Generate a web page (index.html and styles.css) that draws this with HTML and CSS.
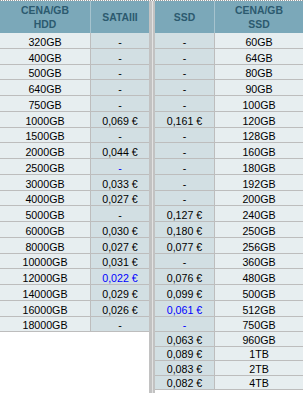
FILE: index.html
```html
<!DOCTYPE html>
<html>
<head>
<meta charset="utf-8">
<link rel="stylesheet" href="styles.css">
</head>
<body>
<div class="wrap">
  <table class="tbl tbl-left">
    <colgroup><col class="w-hdd"><col class="w-sata"></colgroup>
    <thead>
      <tr><th class="bl">CENA/GB<br>HDD</th><th>SATAIII</th></tr>
    </thead>
    <tbody>
      <tr><td class="lt bl">320GB</td><td class="dk">-</td></tr>
      <tr><td class="lt bl">400GB</td><td class="dk">-</td></tr>
      <tr><td class="lt bl">500GB</td><td class="dk">-</td></tr>
      <tr><td class="lt bl">640GB</td><td class="dk">-</td></tr>
      <tr><td class="lt bl">750GB</td><td class="dk">-</td></tr>
      <tr><td class="lt bl">1000GB</td><td class="dk">0,069 €</td></tr>
      <tr><td class="lt bl">1500GB</td><td class="dk">-</td></tr>
      <tr><td class="lt bl">2000GB</td><td class="dk">0,044 €</td></tr>
      <tr><td class="lt bl">2500GB</td><td class="dk blue">-</td></tr>
      <tr><td class="lt bl">3000GB</td><td class="dk">0,033 €</td></tr>
      <tr><td class="lt bl">4000GB</td><td class="dk">0,027 €</td></tr>
      <tr><td class="lt bl">5000GB</td><td class="dk">-</td></tr>
      <tr><td class="lt bl">6000GB</td><td class="dk">0,030 €</td></tr>
      <tr><td class="lt bl">8000GB</td><td class="dk">0,027 €</td></tr>
      <tr><td class="lt bl">10000GB</td><td class="dk">0,031 €</td></tr>
      <tr><td class="lt bl">12000GB</td><td class="dk blue">0,022 €</td></tr>
      <tr><td class="lt bl">14000GB</td><td class="dk">0,029 €</td></tr>
      <tr><td class="lt bl">16000GB</td><td class="dk">0,026 €</td></tr>
      <tr><td class="lt bl">18000GB</td><td class="dk">-</td></tr>
    </tbody>
  </table>
  <div class="sep"><span class="sep-a"></span><span class="sep-b"></span></div>
  <table class="tbl tbl-right">
    <colgroup><col class="w-ssd"><col class="w-cap"></colgroup>
    <thead>
      <tr><th class="bl">SSD</th><th>CENA/GB<br>SSD</th></tr>
    </thead>
    <tbody>
      <tr><td class="dk bl">-</td><td class="lt">60GB</td></tr>
      <tr><td class="dk bl">-</td><td class="lt">64GB</td></tr>
      <tr><td class="dk bl">-</td><td class="lt">80GB</td></tr>
      <tr><td class="dk bl">-</td><td class="lt">90GB</td></tr>
      <tr><td class="dk bl">-</td><td class="lt">100GB</td></tr>
      <tr><td class="dk bl">0,161 €</td><td class="lt">120GB</td></tr>
      <tr><td class="dk bl">-</td><td class="lt">128GB</td></tr>
      <tr><td class="dk bl">-</td><td class="lt">160GB</td></tr>
      <tr><td class="dk bl">-</td><td class="lt">180GB</td></tr>
      <tr><td class="dk bl">-</td><td class="lt">192GB</td></tr>
      <tr><td class="dk bl">-</td><td class="lt">200GB</td></tr>
      <tr><td class="dk bl">0,127 €</td><td class="lt">240GB</td></tr>
      <tr><td class="dk bl">0,180 €</td><td class="lt">250GB</td></tr>
      <tr><td class="dk bl">0,077 €</td><td class="lt">256GB</td></tr>
      <tr><td class="dk bl">-</td><td class="lt">360GB</td></tr>
      <tr><td class="dk bl">0,076 €</td><td class="lt">480GB</td></tr>
      <tr><td class="dk bl">0,099 €</td><td class="lt">500GB</td></tr>
      <tr><td class="dk bl blue">0,061 €</td><td class="lt">512GB</td></tr>
      <tr><td class="dk bl blue">-</td><td class="lt">750GB</td></tr>
      <tr class="short"><td class="dk bl">0,063 €</td><td class="lt">960GB</td></tr>
      <tr class="short"><td class="dk bl">0,089 €</td><td class="lt">1TB</td></tr>
      <tr class="short"><td class="dk bl">0,083 €</td><td class="lt">2TB</td></tr>
      <tr class="short"><td class="dk bl">0,082 €</td><td class="lt">4TB</td></tr>
    </tbody>
  </table>
</div>
</body>
</html>
```

FILE: styles.css
```css
html, body {
  margin: 0;
  padding: 0;
  background: #ffffff;
}

.wrap {
  display: flex;
  align-items: flex-start;
  width: 303px;
  border-top: 1px dotted #9a9a9a;
}

.tbl {
  border-collapse: separate;
  border-spacing: 0;
  table-layout: fixed;
  font-family: "Liberation Sans", Arial, sans-serif;
  font-size: 10.667px;
  color: #000000;
}

.tbl-left { width: 149px; }
.tbl-right { width: 148px; }

.w-hdd { width: 91px; }
.w-sata { width: 58px; }
.w-ssd { width: 60px; }
.w-cap { width: 88px; }

.tbl th {
  box-sizing: border-box;
  height: 32px;
  padding: 2px 0 0;
  background: #7ba8b9;
  color: #2c5a6f;
  font-weight: bold;
  font-size: 10.4px;
  line-height: 14px;
  text-align: center;
  vertical-align: middle;
}

.tbl th.bl { border-right: 1px solid #a6c3ce; }

.tbl td {
  box-sizing: border-box;
  height: 15.75px;
  padding: 0;
  text-align: center;
  vertical-align: bottom;
  line-height: 11px;
  border-bottom: 1px solid #bdbdbd;
  white-space: nowrap;
}

.tbl tr.short td { height: 14.5px; }

.tbl td.bl { border-right: 1px solid #bdbdbd; }

.lt { background: #e7eef0; }
.dk { background: #d2dfe3; }
.blue { color: #0000ff; }

.sep {
  align-self: stretch;
  display: flex;
  width: 6px;
  height: 392px;
  background: #c2c2c2;
  gap: 1px;
}
.sep-a { width: 2px; background: #c2c2c2; }
.sep-b { width: 1px; background: #e2e2e2; }
```
